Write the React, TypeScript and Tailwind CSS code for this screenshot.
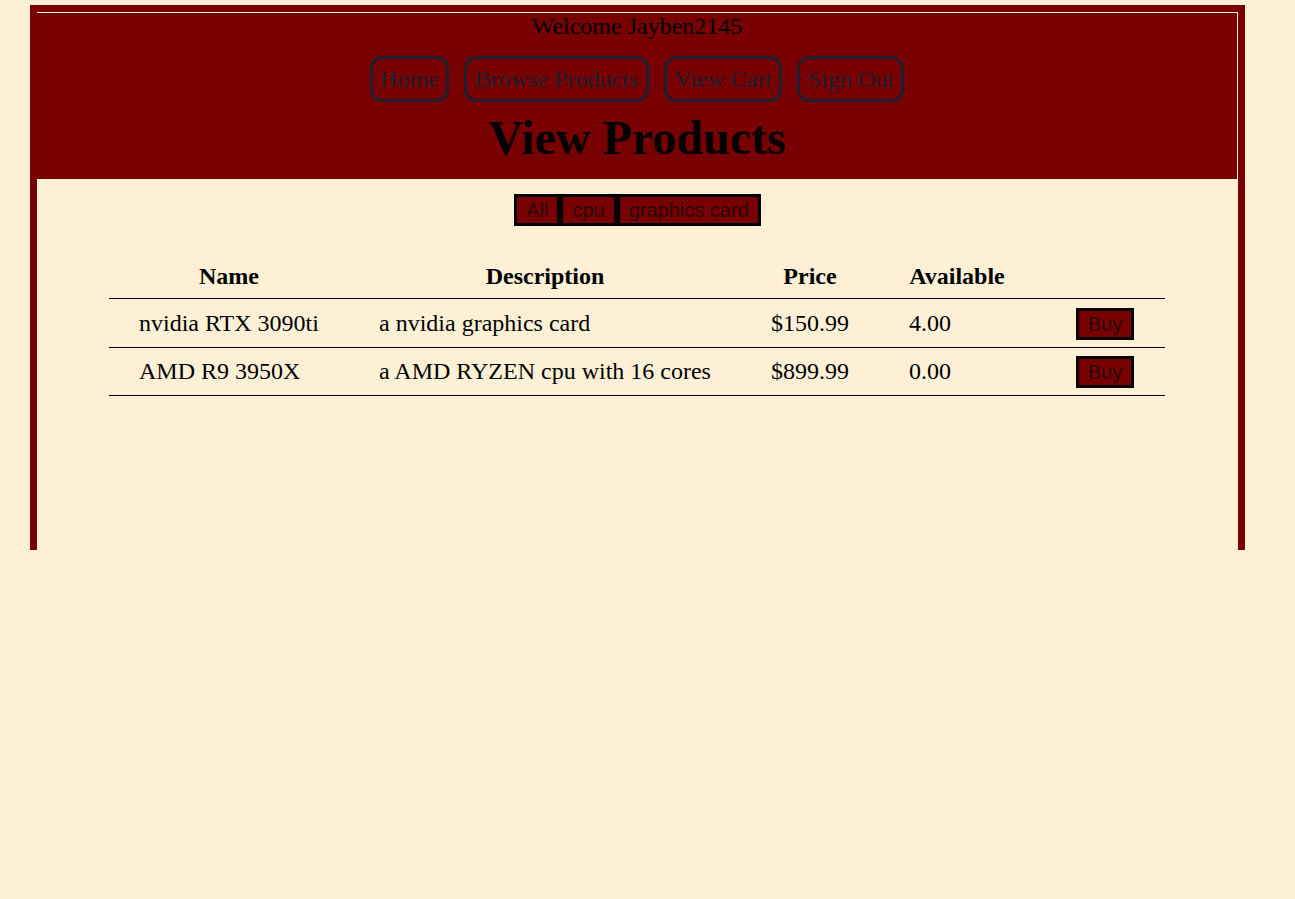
import React from "react";

interface Product {
    name: string;
    description: string;
    price: string;
    available: string;
}

const products: Product[] = [
    { name: "nvidia RTX 3090ti", description: "a nvidia graphics card", price: "$150.99", available: "4.00" },
    { name: "AMD R9 3950X", description: "a AMD RYZEN cpu with 16 cores", price: "$899.99", available: "0.00" },
];

const navLinks = ["Home", "Browse Products", "View Cart", "Sign Out"];
const categories = ["All", "cpu", "graphics card"];

const serif = "font-['Liberation_Serif','Times_New_Roman',serif]";
const sans = "font-['Liberation_Sans',Arial,sans-serif]";

const App: React.FC = () => {
    return (
        <div className="min-h-screen w-full bg-[#fdf0d5] pt-[5px]">
            <div className="ml-[30px] h-[545px] w-[1215px] border-[7px] border-b-0 border-[#780000]">
                <header className={`flex h-[167px] flex-col items-center border-t border-r border-[#fdf0d5] bg-[#780000] text-black ${serif}`}>
                    <p className="-mt-[1px] text-[24px] leading-[28px]">Welcome Jayben2145</p>
                    <nav className="mt-[16px] flex gap-[15px]">
                        {navLinks.map((link) => (
                            <button
                                key={link}
                                className="rounded-[12px] border-[3px] border-[#1e1e2f] px-[7.5px] py-[6px] text-[24px] leading-[28px] text-[#1e1e2f]"
                            >
                                {link}
                            </button>
                        ))}
                    </nav>
                    <h1 className="mt-[8px] text-[48px] font-bold leading-[56px]">View Products</h1>
                </header>

                <div className="mt-[15px] flex justify-center">
                    {categories.map((cat) => (
                        <button
                            key={cat}
                            className={`border-[3px] border-black bg-[#780000] px-[9px] text-[20px] leading-[26px] text-[#2a0505] ${sans}`}
                        >
                            {cat}
                        </button>
                    ))}
                </div>

                <table className={`ml-[72px] mt-[29px] w-[1056px] table-fixed border-collapse text-[24px] text-black ${serif}`}>
                    <colgroup>
                        <col className="w-[240px]" />
                        <col className="w-[392px]" />
                        <col className="w-[138px]" />
                        <col className="w-[156px]" />
                        <col className="w-[130px]" />
                    </colgroup>
                    <thead>
                        <tr className="h-[43px] border-b border-black">
                            <th className="font-bold">Name</th>
                            <th className="font-bold">Description</th>
                            <th className="font-bold">Price</th>
                            <th className="font-bold">Available</th>
                            <th></th>
                        </tr>
                    </thead>
                    <tbody>
                        {products.map((p, i) => (
                            <tr key={p.name} className={`${i === 0 ? "h-[49px]" : "h-[48px]"} border-b border-black`}>
                                <td className="pl-[30px]">{p.name}</td>
                                <td className="pl-[30px]">{p.description}</td>
                                <td className="pl-[30px]">{p.price}</td>
                                <td className="pl-[30px]">{p.available}</td>
                                <td className="pl-[41px]">
                                    <button
                                        className={`border-[3px] border-black bg-[#780000] px-[9px] text-[20px] leading-[26px] text-[#2a0505] ${sans}`}
                                    >
                                        Buy
                                    </button>
                                </td>
                            </tr>
                        ))}
                    </tbody>
                </table>
            </div>
        </div>
    );
};

export default App;
